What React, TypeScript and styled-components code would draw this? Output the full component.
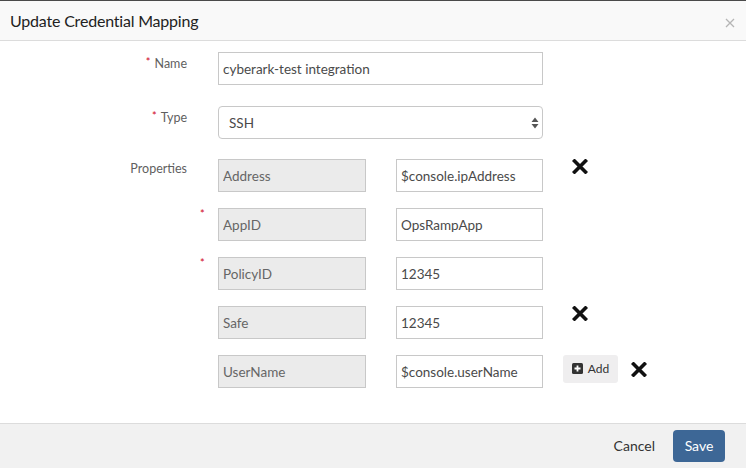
import styled, { createGlobalStyle } from "styled-components";

const GlobalStyle = createGlobalStyle`
  html, body {
    margin: 0;
    padding: 0;
    background: #ffffff;
  }
  body {
    font-family: Lato, "Liberation Sans", sans-serif;
    color: #333;
  }
  * {
    box-sizing: border-box;
  }
`;

const Modal = styled.div`
  width: 746px;
  height: 468px;
  display: flex;
  flex-direction: column;
  border-top: 1px solid #4a4a4a;
  background: #fff;
`;

const Header = styled.div`
  height: 40px;
  display: flex;
  align-items: center;
  justify-content: space-between;
  padding: 0 11px 0 10px;
  background: #f9f9f9;
  border-bottom: 1px solid #dcdcdc;
`;

const Title = styled.h4`
  margin: 0;
  font-size: 16px;
  font-weight: 400;
  color: #222;
  letter-spacing: -0.2px;
`;

const Close = styled.button`
  border: none;
  background: none;
  padding: 0;
  margin-top: 5px;
  width: 10px;
  height: 10px;
  display: flex;
  cursor: pointer;
`;

const Body = styled.div`
  flex: 1;
  padding-top: 11px;
`;

const Row = styled.div<{ $mb: number }>`
  display: flex;
  align-items: flex-start;
  margin-bottom: ${(p) => p.$mb}px;
`;

const Label = styled.label`
  width: 188px;
  padding-right: 1px;
  text-align: right;
  font-size: 12.5px;
  line-height: 19px;
  color: #5f5f5f;
`;

const Star = styled.span`
  color: #d0021b;
  font-size: 11px;
  vertical-align: 2px;
  margin-right: 4px;
`;

const Marker = styled.div`
  width: 30px;
  padding-left: 12px;
  line-height: 12px;
  font-size: 11px;
  color: #d0021b;
`;

const Input = styled.input<{ $w: number; $locked?: boolean }>`
  width: ${(p) => p.$w}px;
  height: 33px;
  border: 1px solid #c8c8c8;
  border-radius: 0;
  padding: 0 4px;
  font-family: inherit;
  font-size: 13.5px;
  color: ${(p) => (p.$locked ? "#666" : "#4a4a4a")};
  background: ${(p) => (p.$locked ? "#ebebeb" : "#fff")};
  outline: none;
`;

const Pair = styled.div`
  display: flex;
  gap: 30px;
`;

const SelectWrap = styled.div`
  position: relative;
  width: 325px;
  height: 33px;
`;

const Select = styled.select`
  width: 100%;
  height: 100%;
  appearance: none;
  border: 1px solid #c8c8c8;
  border-radius: 4px;
  padding: 0 10px;
  font-family: inherit;
  font-size: 13.5px;
  color: #4a4a4a;
  background: #fff;
  outline: none;
`;

const Arrows = styled.svg`
  position: absolute;
  right: 4px;
  top: 11px;
  pointer-events: none;
`;

const Actions = styled.div`
  display: flex;
  align-items: flex-start;
`;

const AddButton = styled.button`
  margin-left: 20px;
  height: 28px;
  width: 55px;
  border: none;
  border-radius: 3px;
  background: #efeeef;
  display: flex;
  align-items: center;
  justify-content: center;
  gap: 5px;
  font-family: inherit;
  font-size: 12px;
  color: #333;
  padding: 0 0 1px 0;
`;

const Remove = styled.button<{ $ml: number }>`
  margin-left: ${(p) => p.$ml}px;
  margin-top: ${(p) => (p.$ml > 20 ? 0 : 7)}px;
  border: none;
  background: none;
  padding: 0;
  width: 16px;
  height: 15px;
  display: flex;
`;

const Footer = styled.div`
  height: 45px;
  display: flex;
  align-items: center;
  justify-content: flex-end;
  gap: 18px;
  padding: 0 21px 1px 0;
  background: #f1f1f1;
  border-top: 1px solid #dcdcdc;
`;

const TextButton = styled.button`
  border: none;
  background: none;
  font-family: inherit;
  font-size: 14px;
  color: #333;
  padding: 0;
`;

const Primary = styled.button`
  height: 32px;
  width: 52px;
  border: none;
  border-radius: 4px;
  background: #3d6796;
  color: #fff;
  font-family: inherit;
  font-size: 14px;
  padding: 0;
`;

const XIcon = () => (
  <svg width="16" height="15" viewBox="0 0 16 15">
    <path d="M2.5 2 L13.5 13 M13.5 2 L2.5 13" stroke="#111" strokeWidth="3.6" strokeLinecap="square" />
  </svg>
);

const PlusSquare = () => (
  <svg width="11" height="11" viewBox="0 0 11 11">
    <rect x="0" y="0" width="11" height="11" rx="1.5" fill="#333" />
    <path d="M5.5 2.5 V8.5 M2.5 5.5 H8.5" stroke="#fff" strokeWidth="1.8" />
  </svg>
);

type Prop = {
  key: string;
  value: string;
  required?: boolean;
  removable?: boolean;
  last?: boolean;
};

const properties: Prop[] = [
  { key: "Address", value: "$console.ipAddress", removable: true },
  { key: "AppID", value: "OpsRampApp", required: true },
  { key: "PolicyID", value: "12345", required: true },
  { key: "Safe", value: "12345", removable: true },
  { key: "UserName", value: "$console.userName", removable: true, last: true },
];

export default function App() {
  return (
    <>
      <GlobalStyle />
      <Modal>
        <Header>
          <Title>Update Credential Mapping</Title>
          <Close aria-label="close">
            <svg width="10" height="10" viewBox="0 0 10 10">
              <path d="M1 1 L9 9 M9 1 L1 9" stroke="#b5b5b5" strokeWidth="1.3" />
            </svg>
          </Close>
        </Header>
        <Body>
          <Row $mb={21}>
            <Label>
              <Star>*</Star>Name
            </Label>
            <Marker />
            <Input $w={325} defaultValue="cyberark-test integration" />
          </Row>
          <Row $mb={20}>
            <Label>
              <Star>*</Star>Type
            </Label>
            <Marker />
            <SelectWrap>
              <Select defaultValue="SSH">
                <option>SSH</option>
                <option>HTTP</option>
              </Select>
              <Arrows width="8" height="12" viewBox="0 0 8 12">
                <path d="M4 0.5 L7.5 5 H0.5 Z M4 11.5 L7.5 7 H0.5 Z" fill="#555" />
              </Arrows>
            </SelectWrap>
          </Row>
          {properties.map((p, i) => (
            <Row key={p.key} $mb={16}>
              <Label>{i === 0 ? "Properties" : ""}</Label>
              <Marker>{p.required ? "*" : ""}</Marker>
              <Pair>
                <Input $w={148} $locked readOnly defaultValue={p.key} />
                <Input $w={147} defaultValue={p.value} />
              </Pair>
              <Actions>
                {p.last && (
                  <AddButton>
                    <PlusSquare />
                    Add
                  </AddButton>
                )}
                {p.removable && (
                  <Remove $ml={p.last ? 13 : 29} aria-label="remove">
                    <XIcon />
                  </Remove>
                )}
              </Actions>
            </Row>
          ))}
        </Body>
        <Footer>
          <TextButton>Cancel</TextButton>
          <Primary>Save</Primary>
        </Footer>
      </Modal>
    </>
  );
}
